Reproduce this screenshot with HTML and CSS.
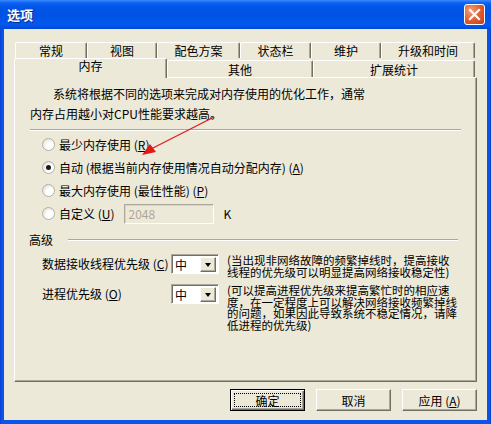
FILE: index.html
```html
<!DOCTYPE html>
<html>
  <head>
    <title>选项</title>
    <link rel="stylesheet" href="styles.css">
  </head>
  <body>
    <div class="window">
      <div class="titlebar">
        <span class="title">选项</span>
        <span class="close">
          <svg width="13" height="13" viewBox="0 0 13 13">
            <path d="M2 2 L11 11 M11 2 L2 11" stroke="#fff" stroke-width="2.2" stroke-linecap="square" />
          </svg>
        </span>
      </div>

      <div class="client">
        <div class="tabs">
          <div class="tab-row back">
            <div class="tab">常规</div>
            <div class="tab">视图</div>
            <div class="tab">配色方案</div>
            <div class="tab">状态栏</div>
            <div class="tab">维护</div>
            <div class="tab">升级和时间</div>
          </div>
          <div class="tab-row front">
            <div class="tab active">内存</div>
            <div class="tab">其他</div>
            <div class="tab">扩展统计</div>
          </div>
        </div>

        <div class="panel">
          <p class="intro">
            系统将根据不同的选项来完成对内存使用的优化工作，通常<br />内存占用越小对CPU性能要求越高。
          </p>
          <div class="separator"></div>

          <div class="options">
            <label class="option"><span class="radio"></span>最少内存使用 (<u>R</u>)</label>
            <label class="option"><span class="radio checked"></span>自动 (根据当前内存使用情况自动分配内存) (<u>A</u>)</label>
            <label class="option"><span class="radio"></span>最大内存使用 (最佳性能) (<u>P</u>)</label>
            <label class="option">
              <span class="radio"></span>自定义 (<u>U</u>)
              <span class="field">2048</span>
              <span class="unit">K</span>
            </label>
          </div>

          <div class="group-head">
            <span>高级</span>
            <span class="group-line"></span>
          </div>

          <div class="priority">
            <span class="prio-label">数据接收线程优先级 (<u>C</u>)</span>
            <span class="combo"><span class="combo-text">中</span><span class="combo-btn"></span></span>
            <span class="prio-desc">(当出现非网络故障的频繁掉线时，提高接收<br />线程的优先级可以明显提高网络接收稳定性)</span>

            <span class="prio-label">进程优先级 (<u>O</u>)</span>
            <span class="combo"><span class="combo-text">中</span><span class="combo-btn"></span></span>
            <span class="prio-desc">(可以提高进程优先级来提高繁忙时的相应速<br />度，在一定程度上可以解决网络接收频繁掉线<br />的问题，如果因此导致系统不稳定情况，请降<br />低进程的优先级)</span>
          </div>
        </div>

        <div class="buttons">
          <button class="btn default"><span>确定</span></button>
          <button class="btn">取消</button>
          <button class="btn">应用 (<u>A</u>)</button>
        </div>
      </div>

      <!-- red annotation arrow pointing at the "auto" option -->
      <svg class="arrow" width="491" height="424" viewBox="0 0 491 424">
        <line x1="214" y1="117" x2="151" y2="149" stroke="#e01818" stroke-width="1.2" />
        <polygon points="142,155 150,144 156,152" fill="#e01818" />
      </svg>
    </div>
  </body>
</html>
```

FILE: styles.css
```css
body {
  margin: 0;
  font-family: "Noto Sans CJK SC", "Noto Sans", sans-serif;
  font-size: 12px;
  color: #000;
}
.window {
  position: relative;
  width: 491px;
  height: 424px;
  background: linear-gradient(90deg, #0a3fd0, #0a55e8 2px, #0a55e8 489px, #0a3fd0);
  display: flex;
  flex-direction: column;
  overflow: hidden;
}
.titlebar {
  height: 29px;
  flex: none;
  box-sizing: border-box;
  padding: 0 6px 0 7px;
  display: flex;
  align-items: center;
  justify-content: space-between;
  background: linear-gradient(#3c8cfd 0, #0c60f2 3px, #0056e6 7px, #0052e4 55%, #0559ee 85%, #0048d6 100%);
}
.title {
  color: #fff;
  font-weight: bold;
  font-size: 13px;
  text-shadow: 1px 1px #0b2a8a;
}
.close {
  width: 21px;
  height: 21px;
  box-sizing: border-box;
  border: 1px solid #fff;
  border-radius: 3px;
  background: radial-gradient(circle at 30% 30%, #f0a07e, #e0592e 55%, #c53d17);
  display: flex;
  align-items: center;
  justify-content: center;
}
.client {
  flex: 1;
  margin: 0 4px 4px;
  background: #ece9d8;
  padding: 13px 10px 0;
}

/* tabs */
.tab-row {
  display: flex;
}
.tab-row.back {
  height: 16px;
  padding-left: 1px;
}
.tab-row.front {
  height: 19px;
  padding-left: 1px;
}
.tab {
  box-sizing: border-box;
  border-top: 1px solid #fff;
  border-left: 1px solid #fff;
  border-right: 1px solid #716f64;
  box-shadow: inset -1px 0 #aca899;
  border-radius: 2px 2px 0 0;
  background: #ece9d8;
  text-align: center;
  line-height: 15px;
}
.back .tab:nth-child(1) { width: 72px; }
.back .tab:nth-child(2) { width: 70px; }
.back .tab:nth-child(3) { width: 83px; }
.back .tab:nth-child(4) { width: 71px; }
.back .tab:nth-child(5) { width: 70px; }
.back .tab:nth-child(6) { width: 94px; }
.front .tab {
  margin-top: 2px;
  line-height: 17px;
}
.front .tab:nth-child(2) { width: 146px; }
.front .tab:nth-child(3) { width: 162px; }
.front .tab.active {
  width: 153px;
  margin: 0 0 -1px -1px;
  line-height: 14px;
  position: relative;
  z-index: 1;
}

/* panel */
.panel {
  box-sizing: border-box;
  height: 305px;
  border: 1px solid;
  border-color: #fff #716f64 #716f64 #fff;
  box-shadow: inset -1px -1px #aca899;
  background: #ece9d8;
}
.intro {
  margin: 6px 0 0 15px;
  line-height: 20px;
  text-indent: 23px;
  white-space: nowrap;
}
.separator {
  margin: 5px 0 0 15px;
  width: 431px;
  border-top: 1px solid #aca899;
  border-bottom: 1px solid #fff;
}
.options {
  margin: 2px 0 0 27px;
}
.option {
  height: 23px;
  display: flex;
  align-items: center;
  white-space: nowrap;
}
.radio {
  width: 13px;
  height: 13px;
  box-sizing: border-box;
  margin-right: 4px;
  border: 1px solid #b3b1a6;
  border-radius: 50%;
  background: radial-gradient(circle at 65% 65%, #fff 35%, #e4e2d8 80%, #d2cfc2);
  display: flex;
  align-items: center;
  justify-content: center;
}
.radio.checked::after {
  content: "";
  width: 5px;
  height: 5px;
  border-radius: 50%;
  background: #1a1a1a;
}
.field {
  width: 90px;
  height: 20px;
  box-sizing: border-box;
  margin-left: 10px;
  padding-left: 3px;
  border: 1px solid;
  border-color: #aca899 #fff #fff #aca899;
  box-shadow: inset 1px 1px #d8d5c6;
  color: #aca899;
  line-height: 18px;
}
.unit {
  margin-left: 9px;
}
.group-head {
  display: flex;
  align-items: center;
  height: 15px;
  margin: 7px 18px 0 14px;
}
.group-line {
  flex: 1;
  margin-left: 15px;
  border-top: 1px solid #aca899;
  border-bottom: 1px solid #fff;
}
.priority {
  display: grid;
  grid-template-columns: 129px 48px auto;
  grid-template-rows: 30px auto;
  column-gap: 0;
  margin: 7px 0 0 27px;
}
.prio-label {
  line-height: 20px;
  white-space: nowrap;
}
.combo {
  width: 48px;
  height: 20px;
  box-sizing: border-box;
  border: 1px solid;
  border-color: #aca899 #fff #fff #aca899;
  box-shadow: inset 1px 1px #716f64;
  background: #fff;
  display: flex;
  align-items: center;
  padding: 2px 2px 1px 3px;
}
.combo-text {
  flex: 1;
  line-height: 15px;
}
.combo-btn {
  width: 16px;
  height: 15px;
  box-sizing: border-box;
  border: 1px solid;
  border-color: #fff #716f64 #716f64 #fff;
  box-shadow: inset -1px -1px #aca899;
  background: #ece9d8;
  display: flex;
  align-items: center;
  justify-content: center;
}
.combo-btn::after {
  content: "";
  border-left: 3.5px solid transparent;
  border-right: 3.5px solid transparent;
  border-top: 4px solid #000;
}
.prio-desc {
  margin: 1px 0 0 8px;
  font-size: 11.5px;
  line-height: 11.6px;
  white-space: nowrap;
}

/* buttons */
.buttons {
  display: flex;
  justify-content: flex-end;
  gap: 11px;
  margin-top: 7px;
}
.btn {
  width: 75px;
  height: 22px;
  box-sizing: border-box;
  border: 1px solid;
  border-color: #fff #716f64 #716f64 #fff;
  box-shadow: inset -1px -1px #aca899;
  background: #ece9d8;
  font-family: inherit;
  font-size: 12px;
  padding: 0;
  color: #000;
}
.btn.default {
  border: 1px solid #000;
  box-shadow: inset 1px 1px #fff, inset -1px -1px #716f64, inset -2px -2px #aca899;
  position: relative;
}
.btn.default::after {
  content: "";
  position: absolute;
  inset: 3px;
  border: 1px dotted #000;
}
.arrow {
  position: absolute;
  left: 0;
  top: 0;
  pointer-events: none;
}
```
